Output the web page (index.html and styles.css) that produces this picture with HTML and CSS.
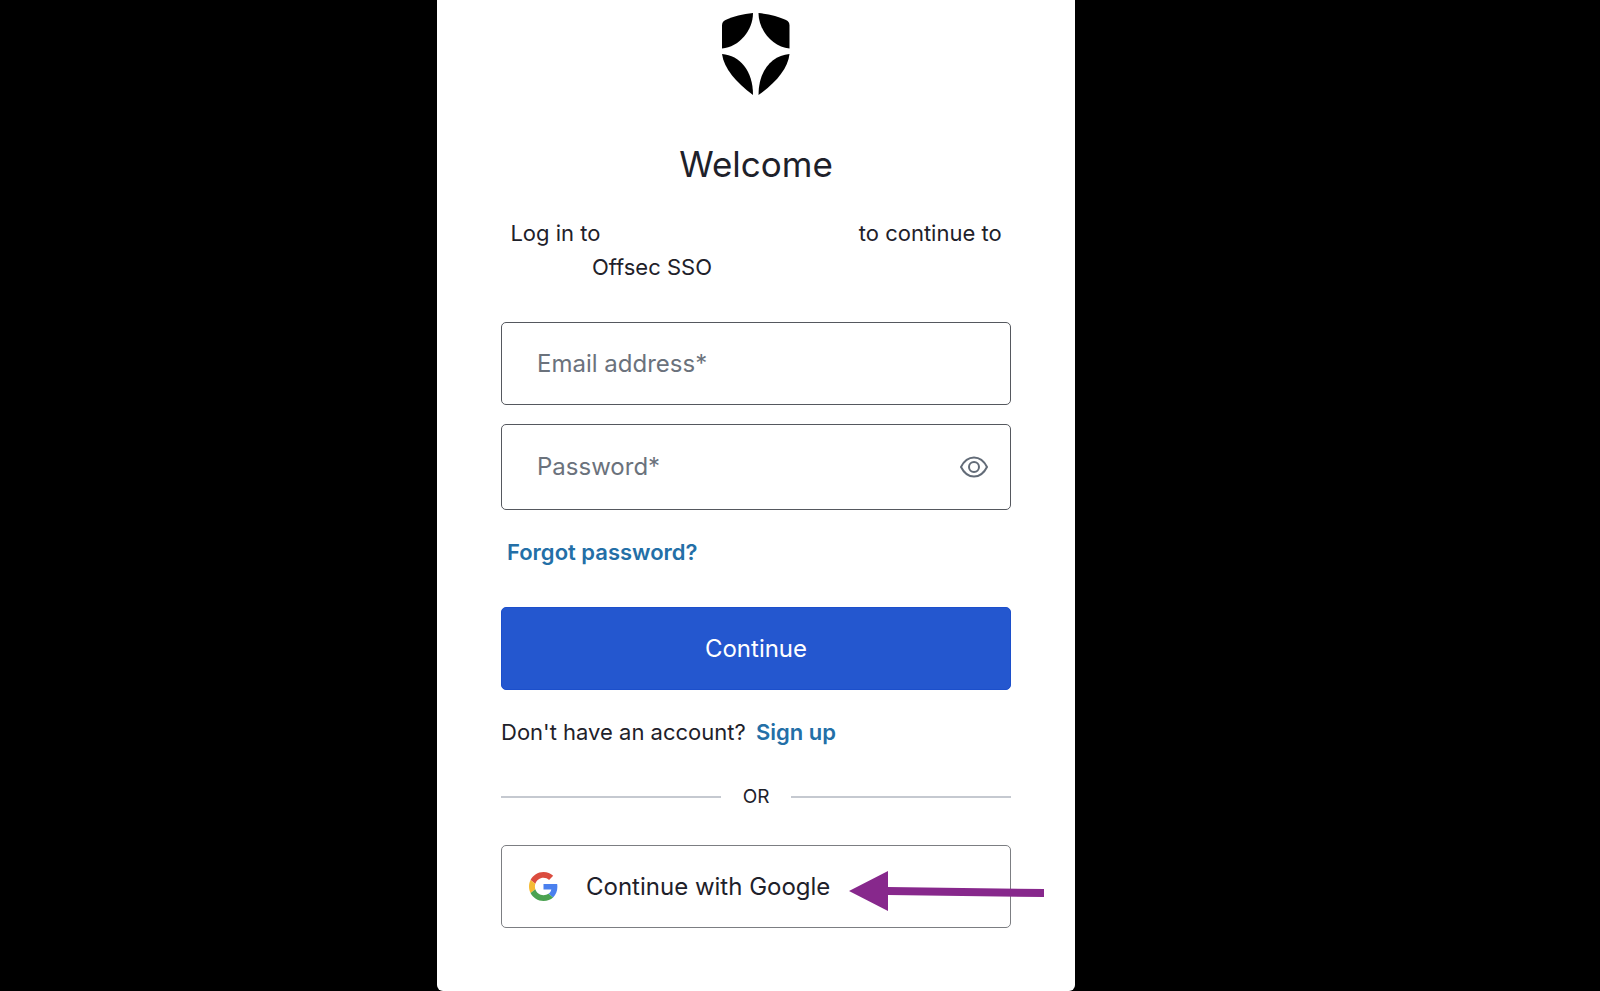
FILE: index.html
```html
<!DOCTYPE html>
<html lang="en">
<head>
  <meta charset="UTF-8" />
  <meta name="viewport" content="width=device-width, initial-scale=1" />
  <title>Log in | Offsec SSO</title>
  <link rel="stylesheet" href="styles.css">
</head>
<body>
  <main class="page">
    <section class="card">
      <header class="card-header">
        <svg class="logo" viewBox="0 0 68 83" aria-hidden="true">
          <path d="M31 0.5C21 1.5 11 4 3.500 7.500C1 8.800 0 10.500 0 13V36C17 34.500 31 18 31 0.500Z" />
          <path d="M36.500 0.5C46.500 1.5 57 4 64 7.5C66.500 8.800 67.500 10.500 67.500 13V36C51 34.500 36.500 18 36.500 0.500Z" />
          <path d="M0 41.500C18 43 31 58 31 82.500C14 70 2 56 0 41.500Z" />
          <path d="M67.500 41.500C50 43 36.500 58 36.500 82.500C54 70 66 56 67.500 41.500Z" />
        </svg>
        <h1>Welcome</h1>
        <p class="intro">Log in to <span class="tenant"></span> to continue to<br>Offsec SSO<span class="tenant tenant-short"></span></p>
      </header>

      <form class="login-form" onsubmit="return false">
        <div class="field">
          <input type="email" id="email" autocomplete="email" />
          <label for="email">Email address*</label>
        </div>
        <div class="field field-password">
          <input type="password" id="password" autocomplete="current-password" />
          <label for="password">Password*</label>
          <button type="button" class="toggle-password" aria-label="Show password">
            <svg viewBox="0 0 28 22" aria-hidden="true">
              <path d="M1 11C4 5 8.500 1.500 14 1.500S24 5 27 11C24 17 19.500 20.500 14 20.500S4 17 1 11Z" />
              <circle cx="14" cy="11" r="5" />
            </svg>
          </button>
        </div>
        <a class="link forgot" href="#">Forgot password?</a>
        <button type="submit" class="btn btn-primary">Continue</button>
      </form>

      <p class="signup">Don't have an account? <a class="link" href="#">Sign up</a></p>

      <div class="divider">OR</div>

      <div class="social">
        <button type="button" class="btn btn-google">
          <svg class="google-logo" viewBox="0 0 48 48" aria-hidden="true">
            <path fill="#db4c3f" d="M24 9.500c3.540 0 6.710 1.220 9.210 3.600l6.850-6.850C35.900 2.380 30.470 0 24 0 14.620 0 6.510 5.380 2.560 13.220l7.980 6.190C12.430 13.720 17.740 9.500 24 9.500z" />
            <path fill="#4a80ee" d="M46.980 24.550c0-1.570-.15-3.090-.38-4.550H24v9.020h12.940c-.58 2.960-2.260 5.480-4.780 7.180l7.730 6c4.510-4.180 7.090-10.360 7.090-17.650z" />
            <path fill="#f5bb35" d="M10.530 28.590c-.48-1.450-.76-2.990-.76-4.590s.27-3.140.76-4.590l-7.980-6.190C.92 16.460 0 20.120 0 24c0 3.880.92 7.540 2.560 10.780l7.970-6.190z" />
            <path fill="#4ba251" d="M24 48c6.480 0 11.930-2.130 15.890-5.810l-7.730-6c-2.150 1.450-4.920 2.300-8.160 2.300-6.260 0-11.570-4.220-13.470-9.910l-7.980 6.190C6.510 42.620 14.620 48 24 48z" />
          </svg>
          Continue with Google
        </button>
        <svg class="arrow" viewBox="0 0 196 42" aria-hidden="true">
          <path d="M0 21L39 1V17L195 19V27L39 25V41Z" />
        </svg>
      </div>
    </section>
  </main>
</body>
</html>
```

FILE: styles.css
```css
* {
  box-sizing: border-box;
}

body {
  margin: 0;
  background: #000;
  color: #1e212a;
  font-family: Inter, "Liberation Sans", sans-serif;
  font-size: 22px;
  line-height: 34px;
}

.page {
  display: flex;
  justify-content: center;
  min-height: 100vh;
  padding-right: 88px;
}

.card {
  width: 100%;
  max-width: 638px;
  padding: 12px 64px 62px;
  background: #fff;
  border-radius: 0 0 6px 6px;
}

/* header */
.card-header {
  text-align: center;
}

.logo {
  display: block;
  width: 68px;
  height: 84px;
  margin: 0 auto;
}

h1 {
  margin: 44px 0 28px;
  font-size: 35px;
  font-weight: 400;
  line-height: 48px;
}

.intro {
  margin: 0;
}

.tenant {
  display: inline-block;
  width: 246px;
}

.tenant-short {
  width: 208px;
}

/* form */
.login-form {
  display: flex;
  flex-direction: column;
  margin-top: 38px;
}

.field {
  position: relative;
  height: 83px;
  margin-bottom: 19px;
}

.field-password {
  height: 86px;
  margin-bottom: 25px;
}

.field input {
  width: 100%;
  height: 100%;
  padding: 0 35px;
  border: 1px solid #55585e;
  border-radius: 5px;
  background: #fff;
  font: inherit;
}

.field label {
  position: absolute;
  top: 50%;
  left: 36px;
  transform: translateY(-50%);
  color: #6b727c;
  font-size: 24px;
  pointer-events: none;
}

.field input:focus + label {
  top: 0;
  padding: 0 4px;
  background: #fff;
}

.toggle-password {
  position: absolute;
  top: 50%;
  right: 23px;
  transform: translateY(-50%);
  display: flex;
  padding: 0;
  border: 0;
  background: none;
  cursor: pointer;
}

.toggle-password svg {
  width: 28px;
  height: 22px;
  fill: none;
  stroke: #626b77;
  stroke-width: 2;
}

.link {
  color: #236fa7;
  font-weight: 600;
  text-decoration: none;
}

.link:hover {
  text-decoration: underline;
}

.forgot {
  align-self: flex-start;
  margin: 0 0 38px 6px;
}

.btn {
  width: 100%;
  height: 83px;
  border-radius: 5px;
  font: inherit;
  font-size: 24px;
  cursor: pointer;
}

.btn-primary {
  border: 1px solid #1c4fcb;
  background: #2457cf;
  color: #fff;
}

.signup {
  margin: 25px 0 31px;
}

.signup .link {
  margin-left: 4px;
}

.divider {
  display: flex;
  align-items: center;
  gap: 22px;
  font-size: 19px;
}

.divider::before,
.divider::after {
  content: "";
  flex: 1;
  height: 2px;
  background: #c5c9d0;
}

/* social login */
.social {
  position: relative;
  margin-top: 31px;
}

.btn-google {
  display: flex;
  align-items: center;
  gap: 28px;
  padding: 0 27px;
  border: 1px solid #7c7e82;
  background: #fff;
  color: #1e212a;
}

.google-logo {
  width: 29px;
  height: 29px;
}

/* pointer laid over the google button */
.arrow {
  position: absolute;
  top: 25px;
  right: -34px;
  width: 196px;
  height: 42px;
  fill: #87288c;
  pointer-events: none;
}
```
